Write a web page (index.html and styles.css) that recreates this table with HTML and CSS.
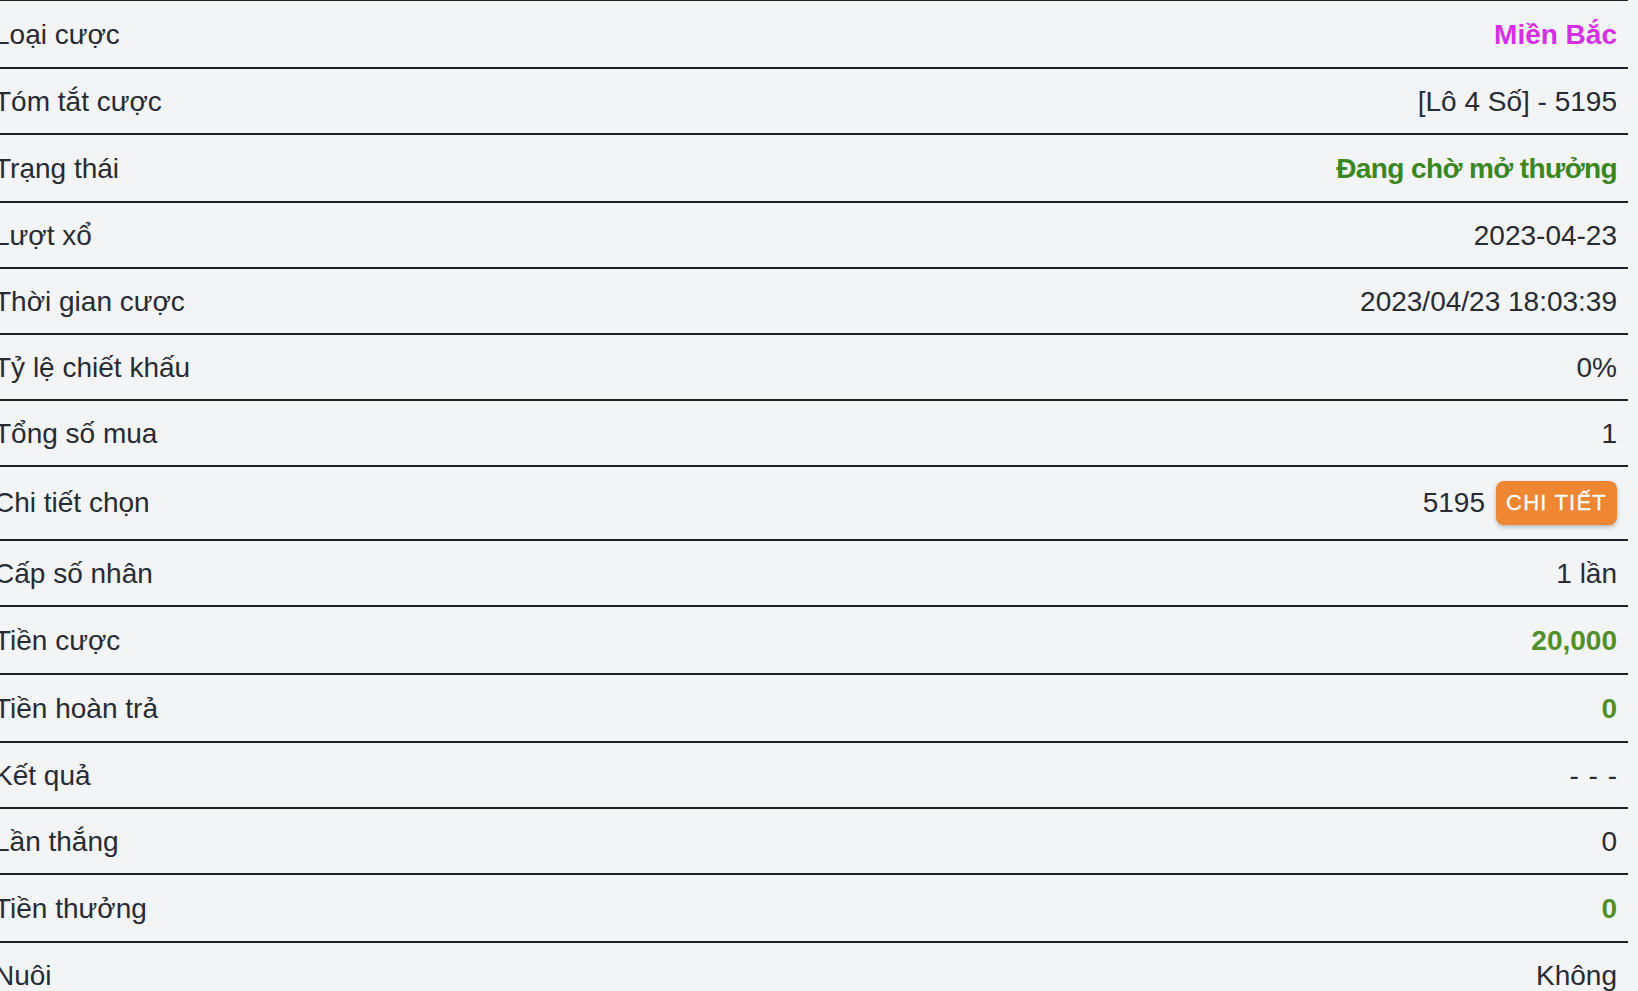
FILE: index.html
```html
<!DOCTYPE html>
<html lang="vi">
<head>
<meta charset="utf-8">
<title>Chi tiết cược</title>
<link rel="stylesheet" href="styles.css">
</head>
<body>
<div class="detail">
  <div class="row"><span class="label">Loại cược</span><span class="value bold magenta">Miền Bắc</span></div>
  <div class="row"><span class="label">Tóm tắt cược</span><span class="value">[Lô 4 Số] - 5195</span></div>
  <div class="row"><span class="label">Trạng thái</span><span class="value medium green">Đang chờ mở thưởng</span></div>
  <div class="row"><span class="label">Lượt xổ</span><span class="value">2023-04-23</span></div>
  <div class="row"><span class="label">Thời gian cược</span><span class="value">2023/04/23 18:03:39</span></div>
  <div class="row"><span class="label">Tỷ lệ chiết khấu</span><span class="value">0%</span></div>
  <div class="row"><span class="label">Tổng số mua</span><span class="value">1</span></div>
  <div class="row row-btn"><span class="label">Chi tiết chọn</span><span class="value with-btn">5195 <button class="btn">CHI TIẾT</button></span></div>
  <div class="row"><span class="label">Cấp số nhân</span><span class="value">1 lần</span></div>
  <div class="row"><span class="label">Tiền cược</span><span class="value bold green2">20,000</span></div>
  <div class="row"><span class="label">Tiền hoàn trả</span><span class="value bold green2">0</span></div>
  <div class="row"><span class="label">Kết quả</span><span class="value dashes">- - -</span></div>
  <div class="row"><span class="label">Lần thắng</span><span class="value">0</span></div>
  <div class="row"><span class="label">Tiền thưởng</span><span class="value bold green2">0</span></div>
  <div class="row"><span class="label">Nuôi</span><span class="value">Không</span></div>
</div>
</body>
</html>
```
FILE: styles.css
```css
html, body {
  margin: 0;
  padding: 0;
  background: #f3f4f6;
}
body {
  font-family: "Liberation Sans", Arial, sans-serif;
  font-size: 28px;
  color: #272b33;
  overflow: hidden;
}
.detail {
  margin: -1px 0 0 -17px;
  width: 1645px;
  border-top: 2px solid #1f2228;
}
.row {
  display: flex;
  justify-content: space-between;
  align-items: center;
  padding: 15px 11px 13px 11px;
  border-bottom: 2px solid #1f2228;
  line-height: 36px;
}
.row-btn {
  padding-top: 14px;
  padding-bottom: 14px;
}
.value {
  text-align: right;
}
.bold {
  font-weight: bold;
  line-height: 38px;
}
.medium {
  font-weight: bold;
  letter-spacing: -0.6px;
  line-height: 38px;
}
.dashes {
  word-spacing: 2px;
}
.magenta { color: #d630e6; }
.green { color: #3a8722; }
.green2 { color: #4f8f2c; }
.with-btn {
  display: flex;
  align-items: center;
  gap: 11px;
}
.btn {
  font-family: "Liberation Sans", Arial, sans-serif;
  font-size: 22px;
  letter-spacing: 1.2px;
  -webkit-text-stroke: 0.3px #fff;
  color: #fff;
  background: #ee8632;
  border: none;
  border-radius: 8px;
  height: 44px;
  width: 121px;
  padding: 0;
  box-shadow: 0 2px 4px rgba(0,0,0,0.25);
}
```
